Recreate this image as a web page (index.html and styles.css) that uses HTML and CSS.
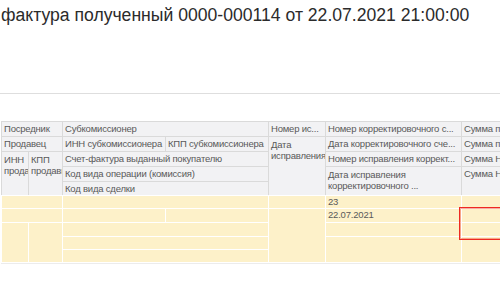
FILE: index.html
```html
<!DOCTYPE html>
<html lang="ru">
<head>
<meta charset="utf-8">
<link rel="stylesheet" href="styles.css">
</head>
<body>
<div class="page">
  <div class="title">фактура полученный 0000-000114 от 22.07.2021 21:00:00</div>
  <div class="divider"></div>
  <div class="table">
    <div class="head">
      <div class="hc c12 r1">Посредник</div>
      <div class="hc c34 r1">Субкомиссионер</div>
      <div class="hc c5 r1">Номер ис...</div>
      <div class="hc c6 r1">Номер корректировочного с...</div>
      <div class="hc c7 r1">Сумма по счету-фактуре</div>

      <div class="hc c12 r2">Продавец</div>
      <div class="hc c3 r2">ИНН субкомиссионера</div>
      <div class="hc c4 r2">КПП субкомиссионера</div>
      <div class="hc c5 r26 wrap">Дата исправления</div>
      <div class="hc c6 r2">Дата корректировочного сче...</div>
      <div class="hc c7 r2">Сумма по счету-фактуре</div>

      <div class="hc c1 r36 wrap">ИНН продавца</div>
      <div class="hc c2 r36 wrap">КПП продавца</div>
      <div class="hc c34 r3">Счет-фактура выданный покупателю</div>
      <div class="hc c6 r3">Номер исправления коррект...</div>
      <div class="hc c7 r3">Сумма НДС</div>

      <div class="hc c34 r4">Код вида операции (комиссия)</div>
      <div class="hc c6 r46 wrap">Дата исправления корректировочного ...</div>
      <div class="hc c7 r46">Сумма НДС</div>

      <div class="hc c34 r5">Код вида сделки</div>
    </div>
    <div class="body">
      <div class="bc c12 r1"></div>
      <div class="bc c34 r1"></div>
      <div class="bc c5 r1"></div>
      <div class="bc c6 r1">23</div>
      <div class="bc c7 r1"></div>

      <div class="bc c12 r2"></div>
      <div class="bc c3 r2"></div>
      <div class="bc c4 r2"></div>
      <div class="bc c5 r26"></div>
      <div class="bc c6 r2">22.07.2021</div>
      <div class="bc c7 r2"></div>

      <div class="bc c1 r36"></div>
      <div class="bc c2 r36"></div>
      <div class="bc c34 r3"></div>
      <div class="bc c6 r3"></div>
      <div class="bc c7 r3"></div>

      <div class="bc c34 r4"></div>
      <div class="bc c6 r46"></div>
      <div class="bc c7 r46"></div>

      <div class="bc c34 r5"></div>

      <div class="current c7 r24"></div>
    </div>
  </div>
</div>
</body>
</html>
```
FILE: styles.css
```css
html, body {
  margin: 0;
  padding: 0;
  background: #ffffff;
}

.page {
  width: 500px;
  height: 300px;
  overflow: hidden;
  font-family: "Liberation Sans", Arial, sans-serif;
}

.title {
  padding: 4px 0 0 1px;
  height: 22px;
  font-size: 17.6px;
  line-height: 22px;
  color: #2b2b2b;
  white-space: nowrap;
}

.divider {
  margin-top: 67px;
  height: 1px;
  background: #dedede;
}

.table {
  margin-top: 27px;
  margin-left: 1px;
  width: 620px;
}

.head,
.body {
  display: grid;
  grid-template-columns: 26px 33px 102px 102px 56px 135px 120px;
  gap: 1px;
  padding: 1px 0 0 1px;
}

.head {
  grid-template-rows: 14px 14px 14px 14px 13px;
  background: #dadada;
}

.body {
  grid-template-rows: 12px 13px 13px 12px 12px;
  background: #ffffff;
  padding-bottom: 1px;
  border-bottom: 1px solid #ececec;
}

.hc {
  background: #f2f2f4;
  color: #595959;
  font-size: 9.5px;
  letter-spacing: -0.2px;
  line-height: 14px;
  padding: 0 2px;
  white-space: nowrap;
  overflow: hidden;
}

.hc.wrap {
  white-space: normal;
  line-height: 11px;
  padding-top: 2px;
}

.bc {
  background: #fdf1c9;
  color: #595959;
  font-size: 9.5px;
  letter-spacing: -0.2px;
  line-height: 12px;
  padding: 0 2px;
  white-space: nowrap;
  overflow: hidden;
}

.current {
  border: 1px solid #ee2a22;
  box-shadow: inset 0 0 0 1px rgba(240, 70, 60, 0.45);
  margin: -2px 0 -4px -3px;
  position: relative;
  z-index: 2;
}

.c1 { grid-column: 1; }
.c2 { grid-column: 2; }
.c3 { grid-column: 3; }
.c4 { grid-column: 4; }
.c5 { grid-column: 5; }
.c6 { grid-column: 6; }
.c7 { grid-column: 7; }
.c12 { grid-column: 1 / 3; }
.c34 { grid-column: 3 / 5; }

.r1 { grid-row: 1; }
.r2 { grid-row: 2; }
.r3 { grid-row: 3; }
.r4 { grid-row: 4; }
.r5 { grid-row: 5; }
.r24 { grid-row: 2 / 4; }
.r26 { grid-row: 2 / 6; }
.r36 { grid-row: 3 / 6; }
.r46 { grid-row: 4 / 6; }
```
